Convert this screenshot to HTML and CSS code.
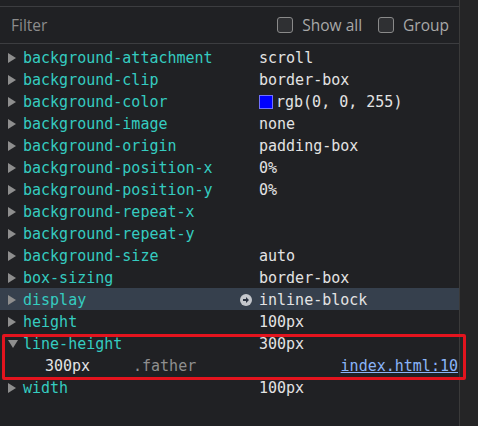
FILE: index.html
```html
<!DOCTYPE html>
<html>
<head>
<meta charset="utf-8">
<link rel="stylesheet" href="styles.css">
</head>
<body>
<div class="app">
  <div class="panel">
    <div class="topstrip"></div>
    <div class="filterbar">
      <span class="filter">Filter</span>
      <label class="check"><span class="box"></span><span>Show all</span></label>
      <label class="check"><span class="box"></span><span>Group</span></label>
    </div>
    <div class="rows">
      <div class="row"><span class="tri"><svg width="8" height="10" viewBox="0 0 8 10"><polygon points="0,0 8,5 0,10" fill="#8e8e8e"/></svg></span><span class="name">background-attachment</span><span class="val">scroll</span></div>
      <div class="row"><span class="tri"><svg width="8" height="10" viewBox="0 0 8 10"><polygon points="0,0 8,5 0,10" fill="#8e8e8e"/></svg></span><span class="name">background-clip</span><span class="val">border-box</span></div>
      <div class="row"><span class="tri"><svg width="8" height="10" viewBox="0 0 8 10"><polygon points="0,0 8,5 0,10" fill="#8e8e8e"/></svg></span><span class="name">background-color</span><span class="val"><span class="swatch"></span>rgb(0, 0, 255)</span></div>
      <div class="row"><span class="tri"><svg width="8" height="10" viewBox="0 0 8 10"><polygon points="0,0 8,5 0,10" fill="#8e8e8e"/></svg></span><span class="name">background-image</span><span class="val">none</span></div>
      <div class="row"><span class="tri"><svg width="8" height="10" viewBox="0 0 8 10"><polygon points="0,0 8,5 0,10" fill="#8e8e8e"/></svg></span><span class="name">background-origin</span><span class="val">padding-box</span></div>
      <div class="row"><span class="tri"><svg width="8" height="10" viewBox="0 0 8 10"><polygon points="0,0 8,5 0,10" fill="#8e8e8e"/></svg></span><span class="name">background-position-x</span><span class="val">0%</span></div>
      <div class="row"><span class="tri"><svg width="8" height="10" viewBox="0 0 8 10"><polygon points="0,0 8,5 0,10" fill="#8e8e8e"/></svg></span><span class="name">background-position-y</span><span class="val">0%</span></div>
      <div class="row"><span class="tri"><svg width="8" height="10" viewBox="0 0 8 10"><polygon points="0,0 8,5 0,10" fill="#8e8e8e"/></svg></span><span class="name">background-repeat-x</span><span class="val"></span></div>
      <div class="row"><span class="tri"><svg width="8" height="10" viewBox="0 0 8 10"><polygon points="0,0 8,5 0,10" fill="#8e8e8e"/></svg></span><span class="name">background-repeat-y</span><span class="val"></span></div>
      <div class="row"><span class="tri"><svg width="8" height="10" viewBox="0 0 8 10"><polygon points="0,0 8,5 0,10" fill="#8e8e8e"/></svg></span><span class="name">background-size</span><span class="val">auto</span></div>
      <div class="row"><span class="tri"><svg width="8" height="10" viewBox="0 0 8 10"><polygon points="0,0 8,5 0,10" fill="#8e8e8e"/></svg></span><span class="name">box-sizing</span><span class="val">border-box</span></div>
      <div class="row hl"><span class="tri"><svg width="8" height="10" viewBox="0 0 8 10"><polygon points="0,0 8,5 0,10" fill="#8e8e8e"/></svg></span><span class="name">display</span><span class="val"><svg class="goto" width="12" height="12" viewBox="0 0 12 12"><circle cx="6" cy="6" r="6" fill="#c4c7cc"/><path d="M3 5h3V3l3 3-3 3V7H3z" fill="#2b3340"/></svg>inline-block</span></div>
      <div class="row"><span class="tri"><svg width="8" height="10" viewBox="0 0 8 10"><polygon points="0,0 8,5 0,10" fill="#8e8e8e"/></svg></span><span class="name">height</span><span class="val">100px</span></div>
      <div class="row"><span class="tri"><svg width="10" height="8" viewBox="0 0 10 8"><polygon points="0,0 10,0 5,8" fill="#8e8e8e"/></svg></span><span class="name">line-height</span><span class="val">300px</span></div>
      <div class="row sub"><span class="subval">300px</span><span class="sel">.father</span><a class="link">index.html:10</a></div>
      <div class="row"><span class="tri"><svg width="8" height="10" viewBox="0 0 8 10"><polygon points="0,0 8,5 0,10" fill="#8e8e8e"/></svg></span><span class="name">width</span><span class="val">100px</span></div>
    </div>
  </div>
  <div class="scroll"></div>
  <div class="redbox"></div>
</div>
</body>
</html>
```
FILE: styles.css
```css
html, body {
  margin: 0;
  padding: 0;
  background: #202124;
}
.app {
  position: relative;
  display: flex;
  width: 478px;
  height: 426px;
  overflow: hidden;
}
.panel {
  width: 459px;
  flex: none;
  display: flex;
  flex-direction: column;
  background: #202124;
}
.topstrip {
  height: 6px;
  border-bottom: 1px solid #3c3d40;
}
.filterbar {
  height: 36px;
  border-bottom: 1px solid #3c3d40;
  display: flex;
  align-items: center;
  padding: 0 10px 0 11px;
  font-family: "Open Sans", "Noto Sans", sans-serif;
  font-size: 15.5px;
  color: #a8a8a8;
}
.filter {
  flex: 1;
  color: #8c8c8c;
}
.check {
  display: flex;
  align-items: center;
  gap: 9px;
  margin-left: 16px;
}
.box {
  width: 14px;
  height: 14px;
  border: 1px solid #8a8a8a;
  border-radius: 3px;
  background: #2f3033;
}
.rows {
  padding-top: 2px;
  font-family: "DejaVu Sans Mono", "Liberation Mono", monospace;
  font-size: 15px;
}
.row {
  height: 22px;
  box-sizing: border-box;
  padding-top: 2px;
  line-height: 20px;
  display: flex;
  align-items: center;
  white-space: nowrap;
}
.row.hl {
  background: #36404d;
}
.tri {
  width: 23px;
  flex: none;
  display: flex;
  align-items: center;
  padding-left: 8px;
  box-sizing: border-box;
}
.tri svg { display: block; }
.name {
  width: 236px;
  flex: none;
  color: #35ccc0;
}
.val {
  color: #e3e3e3;
  display: flex;
  align-items: center;
  position: relative;
}
.swatch {
  width: 12px;
  height: 12px;
  background: #0000ff;
  border: 1px solid #7070ff;
  margin-right: 3px;
}
.goto {
  position: absolute;
  left: -19px;
  top: 4px;
}
.sub {
  padding-left: 45px;
}
.subval {
  width: 88px;
  flex: none;
  color: #e3e3e3;
}
.sel {
  flex: 1;
  color: #8f8f8f;
}
.link {
  color: #8ab4f8;
  text-decoration: underline;
  padding-right: 1px;
}
.scroll {
  flex: 1;
  background: #252526;
  border-left: 1px solid #3a3a3a;
}
.redbox {
  position: absolute;
  left: 2px;
  top: 334px;
  width: 458px;
  height: 40px;
  border: 3px solid #e3141e;
  border-radius: 2px;
}
```
